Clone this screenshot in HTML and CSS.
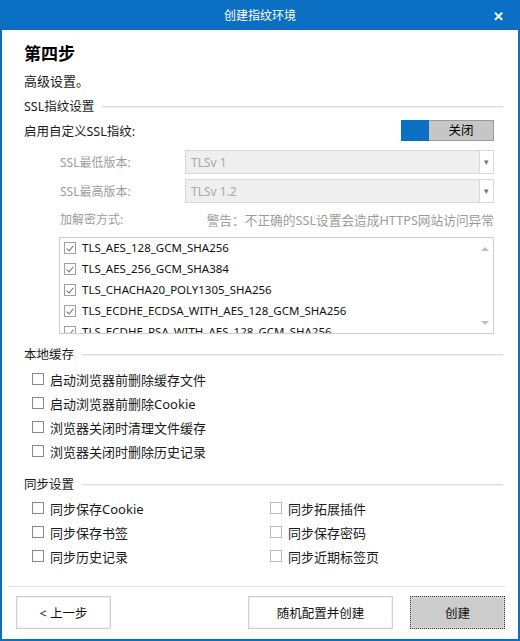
FILE: index.html
```html
<!DOCTYPE html>
<html lang="zh-CN">
<head>
  <meta charset="UTF-8" />
  <title>创建指纹环境</title>
  <link rel="stylesheet" href="styles.css">
</head>
<body>

<div class="window">
  <!-- Title bar -->
  <div class="titlebar">
    <span class="title">创建指纹环境</span>
    <span class="close">✕</span>
  </div>

  <div class="content">
    <h2 class="step">第四步</h2>
    <div class="desc">高级设置。</div>

    <!-- SSL -->
    <div class="group-title"><span>SSL指纹设置</span><i></i></div>
    <div class="row-toggle">
      <span>启用自定义SSL指纹:</span>
      <div class="switch"><span class="switch-on"></span><span class="switch-off">关闭</span></div>
    </div>

    <div class="field">
      <label>SSL最低版本:</label>
      <div class="select"><span>TLSv 1</span><b class="drop">▾</b></div>
    </div>
    <div class="field">
      <label>SSL最高版本:</label>
      <div class="select"><span>TLSv 1.2</span><b class="drop">▾</b></div>
    </div>
    <div class="field-note">
      <span>加解密方式:</span>
      <span class="warn">警告：不正确的SSL设置会造成HTTPS网站访问异常</span>
    </div>

    <div class="listbox">
      <div class="list-items">
        <div class="item"><span class="cb checked"></span>TLS_AES_128_GCM_SHA256</div>
        <div class="item"><span class="cb checked"></span>TLS_AES_256_GCM_SHA384</div>
        <div class="item"><span class="cb checked"></span>TLS_CHACHA20_POLY1305_SHA256</div>
        <div class="item"><span class="cb checked"></span>TLS_ECDHE_ECDSA_WITH_AES_128_GCM_SHA256</div>
        <div class="item"><span class="cb checked"></span>TLS_ECDHE_RSA_WITH_AES_128_GCM_SHA256</div>
      </div>
      <div class="scrollbar">
        <span class="arrow up"></span>
        <span class="arrow down"></span>
      </div>
    </div>

    <!-- Local cache -->
    <div class="group-title cache-title"><span>本地缓存</span><i></i></div>
    <div class="checks">
      <div class="check"><span class="cb"></span>启动浏览器前删除缓存文件</div>
      <div class="check"><span class="cb"></span>启动浏览器前删除Cookie</div>
      <div class="check"><span class="cb"></span>浏览器关闭时清理文件缓存</div>
      <div class="check"><span class="cb"></span>浏览器关闭时删除历史记录</div>
    </div>

    <!-- Sync -->
    <div class="group-title sync-title"><span>同步设置</span><i></i></div>
    <div class="sync-grid">
      <div class="check"><span class="cb"></span>同步保存Cookie</div>
      <div class="check"><span class="cb light"></span>同步拓展插件</div>
      <div class="check"><span class="cb"></span>同步保存书签</div>
      <div class="check"><span class="cb light"></span>同步保存密码</div>
      <div class="check"><span class="cb"></span>同步历史记录</div>
      <div class="check"><span class="cb light"></span>同步近期标签页</div>
    </div>
  </div>

  <div class="footer">
    <button class="btn">&lt; 上一步</button>
    <div class="footer-right">
      <button class="btn wide">随机配置并创建</button>
      <button class="btn primary">创建</button>
    </div>
  </div>
</div>

</body>
</html>
```

FILE: styles.css
```css
* { box-sizing: border-box; font-family: "Noto Sans", "Noto Sans CJK SC", sans-serif; }
body {
  margin: 0;
  background: #ffffff;
  color: #1a1a1a;
  font-size: 12px;
}

.window {
  width: 520px;
  height: 641px;
  border: 2px solid #0b6fc4;
  border-top: none;
  display: flex;
  flex-direction: column;
  background: #fff;
}

/* Title bar */
.titlebar {
  height: 30px;
  margin: 0 -2px;
  background: #0b6fc4;
  border-bottom: 1px solid #1a66b0;
  color: #fff;
  display: flex;
  align-items: center;
  justify-content: center;
  position: relative;
}
.title { font-size: 12px; }
.close {
  position: absolute;
  right: 16px;
  top: 7px;
  font-size: 13px;
  font-weight: bold;
}

.content {
  flex: 1;
  padding: 13px 15px 0 22px;
}

.step {
  margin: 0;
  font-size: 17px;
  line-height: 22px;
  font-weight: bold;
  color: #000;
}
.desc {
  margin-top: 7px;
  font-size: 13px;
  line-height: 18px;
}

.group-title {
  display: flex;
  align-items: center;
  margin-top: 8px;
  line-height: 18px;
  font-size: 12.5px;
}
.group-title i {
  flex: 1;
  height: 2px;
  margin-left: 8px;
  border-top: 1px solid #dcdcdc;
  border-bottom: 1px solid #f4f4f4;
}

.row-toggle {
  display: flex;
  justify-content: space-between;
  align-items: center;
  margin-top: 3px;
  height: 22px;
  padding-right: 9px;
  font-size: 12.5px;
}
.switch {
  display: flex;
  height: 21px;
}
.switch-on {
  width: 28px;
  background: #0b6fc4;
}
.switch-off {
  width: 65px;
  background: #c6c6c6;
  border: 1px solid #9a9a9a;
  border-left: none;
  text-align: center;
  line-height: 19px;
  font-size: 12.5px;
  color: #000;
}

/* disabled fields */
.field {
  display: flex;
  align-items: center;
  margin-top: 9px;
  height: 24px;
  padding-left: 36px;
  padding-right: 9px;
}
.field + .field { margin-top: 5px; }
.field label {
  width: 125px;
  color: #9b9b9b;
}
.select {
  flex: 1;
  height: 24px;
  background: #efefef;
  border: 1px solid #d8d8d8;
  display: flex;
  align-items: center;
  justify-content: space-between;
  padding-left: 5px;
  color: #a8a8a8;
}
.drop {
  width: 14px;
  height: 22px;
  background: #fff;
  border-left: 1px solid #d8d8d8;
  font-weight: normal;
  font-size: 9px;
  color: #777;
  text-align: center;
  line-height: 22px;
}

.field-note {
  display: flex;
  justify-content: space-between;
  margin-top: 8px;
  line-height: 18px;
  padding-left: 36px;
  padding-right: 9px;
  color: #9b9b9b;
}
.warn { font-size: 12.7px; }

.listbox {
  display: flex;
  margin: 8px 9px 0 35px;
  height: 97px;
  border: 1px solid #cfcfcf;
  overflow: hidden;
}
.list-items {
  flex: 1;
  padding: 0 0 0 4px;
  margin-top: -1px;
}
.item {
  display: flex;
  align-items: center;
  height: 21px;
  font-size: 11.5px;
  color: #111;
}
.scrollbar {
  width: 17px;
  display: flex;
  flex-direction: column;
  justify-content: space-between;
  align-items: center;
  padding: 9px 0 8px;
}
.arrow {
  width: 0;
  height: 0;
  border-left: 4px solid transparent;
  border-right: 4px solid transparent;
}
.arrow.up { border-bottom: 4px solid #bdbdbd; }
.arrow.down { border-top: 4px solid #bdbdbd; }

/* checkboxes */
.cb {
  width: 12px;
  height: 12px;
  border: 1px solid #8a8a8a;
  background: #fff;
  margin-right: 6px;
  flex-shrink: 0;
  position: relative;
}
.cb.light { border-color: #b8b8b8; }
.cb.checked { border-color: #a0a0a0; }
.cb.checked:after {
  content: "";
  position: absolute;
  left: 3px;
  top: 1px;
  width: 3px;
  height: 6px;
  border-right: 1.5px solid #707070;
  border-bottom: 1.5px solid #707070;
  transform: rotate(40deg);
}

.cache-title { margin-top: 12px; }
.checks {
  padding-left: 8px;
  margin-top: 3px;
}
.check {
  display: flex;
  align-items: center;
  height: 24px;
  font-size: 13px;
}

.sync-title { margin-top: 13px; }
.sync-grid {
  display: grid;
  grid-template-columns: 238px 1fr;
  padding-left: 8px;
  margin-top: 2px;
}

/* footer */
.footer {
  margin: 0 13px 0 6px;
  border-top: 1px solid #e0e0e0;
  padding: 9px 0 10px 8px;
  display: flex;
  justify-content: space-between;
}
.footer-right {
  display: flex;
  gap: 17px;
}
.btn {
  width: 95px;
  height: 33px;
  background: #fff;
  border: 1px solid #cfcfcf;
  box-shadow: inset 0 0 0 1px #f2f2f2;
  font-size: 12.5px;
  color: #111;
  padding: 0;
}
.btn.wide { width: 145px; }
.btn.primary {
  background: #cccccc;
  border: 1px dotted #333;
  box-shadow: inset 0 0 0 1px #dadada;
}
```
